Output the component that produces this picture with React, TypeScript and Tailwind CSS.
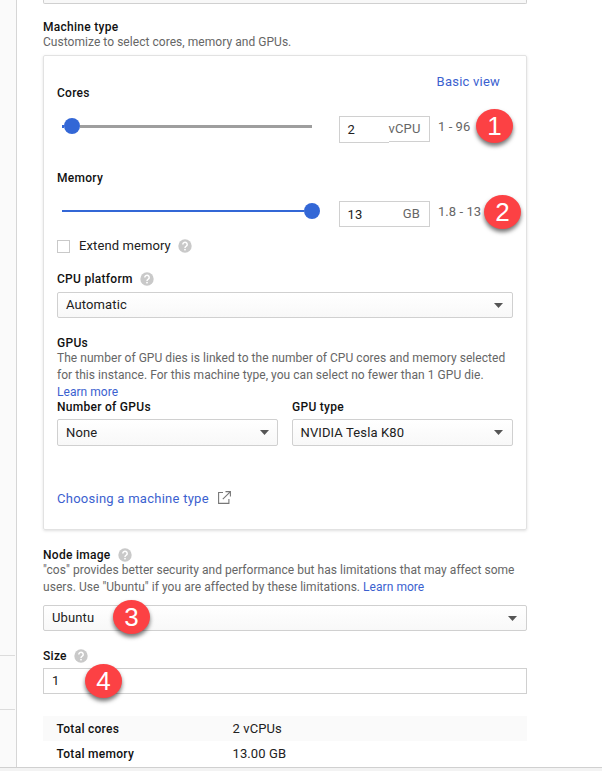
import type { ReactNode } from "react";

function Help({ className = "" }: { className?: string }) {
  return (
    <svg viewBox="0 0 14 14" className={`size-[14px] shrink-0 ${className}`}>
      <circle cx="7" cy="7" r="6.7" fill="#c9c9c9" />
      <path d="M4.8 5.4a2.2 2.1 0 1 1 3.5 1.7C7.5 7.7 7 8 7 8.9" fill="none" stroke="#fff" strokeWidth="1.5" />
      <rect x="6.2" y="9.9" width="1.6" height="1.5" fill="#fff" />
    </svg>
  );
}

function Label({ children, className = "" }: { children: ReactNode; className?: string }) {
  return (
    <div className={`flex h-4 items-center text-[12px] leading-4 font-medium tracking-[0.28px] text-[#111] ${className}`}>
      {children}
    </div>
  );
}

function Note({ children, className = "" }: { children: ReactNode; className?: string }) {
  return <p className={`text-[12px] leading-[17px] tracking-[0.045px] whitespace-nowrap text-[#666] ${className}`}>{children}</p>;
}

function Select({ value, className = "pr-[9px] pl-2" }: { value: string; className?: string }) {
  return (
    <div
      className={`flex items-center justify-between rounded-[2px] border border-[#d0d0d0] bg-linear-to-b from-white to-[#f8f8f8] text-[13px] leading-4 tracking-[0.12px] text-[#212121] ${className}`}
    >
      <span>{value}</span>
      <svg viewBox="0 0 9 5" className="h-[5px] w-[9px]">
        <path d="M0 0h9L4.5 5z" fill="#555" />
      </svg>
    </div>
  );
}

function Marker({ n, className }: { n: number; className: string }) {
  return (
    <div
      className={`absolute flex h-[34px] w-[37px] items-center justify-center rounded-[50%] bg-[#fc4144] font-['Liberation_Sans',sans-serif] text-[26px] leading-none text-white shadow-[0_3px_4px_rgba(0,0,0,0.55)] ${className}`}
    >
      {n}
    </div>
  );
}

export default function App() {
  return (
    <div className="relative h-[771px] w-[602px] overflow-hidden bg-white font-[Roboto,sans-serif] text-[#212121]">
      <div className="flex h-[767px]">
        <aside className="flex w-[17px] shrink-0 flex-col border-r border-[#d6d6d6] bg-[#fafafa]">
          <div className="h-[656px] w-[15px] border-b border-[#dcdcdc]" />
          <div className="h-[54px] w-[15px] border-b border-[#dcdcdc]" />
        </aside>
        <main className="ml-[26px] w-[484px]">
          <div className="h-1 rounded-b-[2px] border border-t-0 border-[#d0d0d0] bg-[#f8f8f8]" />
          <Label className="mt-[15px]">Machine type</Label>
          <Note className="-mt-px">Customize to select cores, memory and GPUs.</Note>

          <section className="mt-1 h-[475px] rounded-[2px] border border-[#e2e2e2] px-[13px] pt-[18px] shadow-[0_1px_3px_rgba(0,0,0,0.13)]">
            <div className="flex h-[27px] justify-between pr-[13px]">
              <Label className="self-end">Cores</Label>
              <a className="text-[13px] leading-4 tracking-[0.22px] text-[#3b61cf]">Basic view</a>
            </div>

            <div className="mt-[15px] flex h-[27px]">
              <div className="mt-[2px] ml-[5px] flex h-4 w-[250px] items-center">
                <div className="h-[3px] w-[2px] bg-[#3367d6]" />
                <div className="size-4 rounded-full bg-[#3367d6]" />
                <div className="h-[3px] flex-1 bg-[#9e9e9e]" />
              </div>
              <div className="ml-[27px] flex w-[91px] text-[13px] leading-4 tracking-[0.15px]">
                <div className="h-[27px] w-[50px] border border-r-0 border-[#d0d0d0] pt-[5px] pl-[7.5px]">2</div>
                <div className="h-[26px] w-[41px] border border-l-0 border-[#d0d0d0] pt-1 text-[#666]">
                  <span className="-ml-[0.5px]">vCPU</span>
                </div>
              </div>
              <span className="mt-[3px] ml-2 text-[13px] leading-4 tracking-[0.05px] whitespace-nowrap text-[#666]">1 - 96</span>
            </div>

            <Label className="mt-[27px]">Memory</Label>
            <div className="mt-[15px] flex h-[26px]">
              <div className="mt-[2px] ml-[5px] flex h-4 w-[258px] items-center">
                <div className="h-[2px] flex-1 bg-[#3367d6]" />
                <div className="size-4 rounded-full bg-[#3367d6]" />
              </div>
              <div className="ml-[19px] flex w-[91px] justify-between border border-[#d0d0d0] pr-[9px] pl-[7.5px] text-[13px] leading-4 tracking-[0.15px]">
                <span className="pt-[5px]">13</span>
                <span className="pt-1 text-[#666]">GB</span>
              </div>
              <span className="mt-[3px] ml-2 text-[13px] leading-4 tracking-[0.05px] whitespace-nowrap text-[#666]">1.8 - 13</span>
            </div>

            <div className="mt-[11px] flex h-4 items-center text-[13px] leading-4 tracking-[0.1px]">
              <div className="size-[13px] border border-[#c9c9c9]" />
              <span className="ml-[9px]">Extend memory</span>
              <Help className="ml-[7.5px]" />
            </div>
            <Label className="mt-[17px]">
              CPU platform
              <Help className="ml-[7px]" />
            </Label>
            <Select value="Automatic" className="mt-[5px] h-[26px] pr-[9px] pl-2" />

            <Label className="mt-[17px]">GPUs</Label>
            <Note className="-mt-px">
              The number of GPU dies is linked to the number of CPU cores and memory selected
              <br />
              for this instance. For this machine type, you can select no fewer than 1 GPU die.
              <br />
              <a className="text-[#3b61cf]">Learn more</a>
            </Note>
            <div className="-mt-[2px] grid grid-cols-[221px_221px] gap-x-[14px]">
              <div>
                <Label>Number of GPUs</Label>
                <Select value="None" className="mt-1 h-[27px] pr-2 pl-2" />
              </div>
              <div>
                <Label>GPU type</Label>
                <Select value="NVIDIA Tesla K80" className="mt-1 h-[27px] pr-[9px] pl-[7.5px]" />
              </div>
            </div>
            <a className="mt-[45px] flex h-4 items-center text-[13px] leading-4 tracking-[0.26px] text-[#3b61cf]">
              Choosing a machine type
              <svg viewBox="0 0 13 13" className="-mt-[4px] ml-[9px] size-[13px]" fill="none" stroke="#777" strokeWidth="1.1">
                <path d="M5 1.5H.6v10.9h10.3V8M7.5.6h4.9v4.9M12.2.8 4.8 8.2" />
              </svg>
            </a>
          </section>

          <Label className="mt-[17px]">
            Node image
            <Help className="ml-[7px]" />
          </Label>
          <Note className="-mt-px">
            "cos" provides better security and performance but has limitations that may affect some
            <br />
            users. Use "Ubuntu" if you are affected by these limitations. <a className="text-[#3b61cf]">Learn more</a>
          </Note>
          <Select value="Ubuntu" className="mt-[9px] h-[26px] pr-[9px] pl-2" />
          <Label className="mt-[17px]">
            Size
            <Help className="ml-[7px]" />
          </Label>
          <div className="mt-1 flex h-[26px] items-center border border-[#d0d0d0] pl-2 text-[13px] leading-4">1</div>

          <div className="mt-[22px] text-[12px] leading-[26px]">
            <div className="flex h-[25px] bg-[#fafafa] pl-[13.5px]">
              <span className="w-[176px] font-medium tracking-[0.28px] text-[#111]">Total cores</span>
              <span className="text-[13px] tracking-[0.1px]">2 vCPUs</span>
            </div>
            <div className="flex h-[25px] pl-[13.5px]">
              <span className="w-[176px] font-medium tracking-[0.28px] text-[#111]">Total memory</span>
              <span className="text-[13px] tracking-[0.1px]">13.00 GB</span>
            </div>
          </div>
        </main>
      </div>
      <div className="h-1 border-t border-[#d0d0d0] bg-[#f3f3f3]" />

      <Marker n={1} className="top-[109px] left-[476px]" />
      <Marker n={2} className="top-[195px] left-[484px]" />
      <Marker n={3} className="top-[600px] left-[113px]" />
      <Marker n={4} className="top-[664px] left-[85px]" />
    </div>
  );
}
